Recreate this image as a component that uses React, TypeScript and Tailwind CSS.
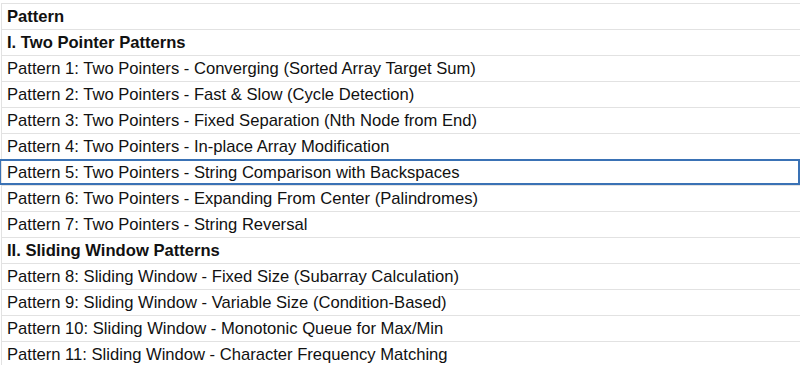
type Row = { text: string; bold?: boolean; selected?: boolean };

const rows: Row[] = [
  { text: "Pattern", bold: true },
  { text: "I. Two Pointer Patterns", bold: true },
  { text: "Pattern 1: Two Pointers - Converging (Sorted Array Target Sum)" },
  { text: "Pattern 2: Two Pointers - Fast & Slow (Cycle Detection)" },
  { text: "Pattern 3: Two Pointers - Fixed Separation (Nth Node from End)" },
  { text: "Pattern 4: Two Pointers - In-place Array Modification" },
  { text: "Pattern 5: Two Pointers - String Comparison with Backspaces", selected: true },
  { text: "Pattern 6: Two Pointers - Expanding From Center (Palindromes)" },
  { text: "Pattern 7: Two Pointers - String Reversal" },
  { text: "II. Sliding Window Patterns", bold: true },
  { text: "Pattern 8: Sliding Window - Fixed Size (Subarray Calculation)" },
  { text: "Pattern 9: Sliding Window - Variable Size (Condition-Based)" },
  { text: "Pattern 10: Sliding Window - Monotonic Queue for Max/Min" },
  { text: "Pattern 11: Sliding Window - Character Frequency Matching" },
];

const Cell = ({ row }: { row: Row }) => {
  return (
    <div className="relative flex h-[26px] items-center border-b border-[#e2e2e2] pl-[5px] pt-px">
      <span
        className={
          row.bold
            ? "text-[16.6px] font-bold leading-none text-[#111]"
            : "text-[16.6px] leading-none text-[#111]"
        }
      >
        {row.text}
      </span>
      {row.selected && (
        <div className="pointer-events-none absolute -top-px bottom-0 -left-[3px] right-0 border-2 border-[#3a72b5]" />
      )}
    </div>
  );
};

export default function App() {
  return (
    <div className="h-[365px] w-[800px] overflow-hidden bg-white font-['Liberation_Sans',Arial,sans-serif]">
      <div className="mt-[3px] ml-px border-t border-l border-[#e2e2e2]">
        {rows.map((row) => (
          <Cell key={row.text} row={row} />
        ))}
      </div>
    </div>
  );
}
